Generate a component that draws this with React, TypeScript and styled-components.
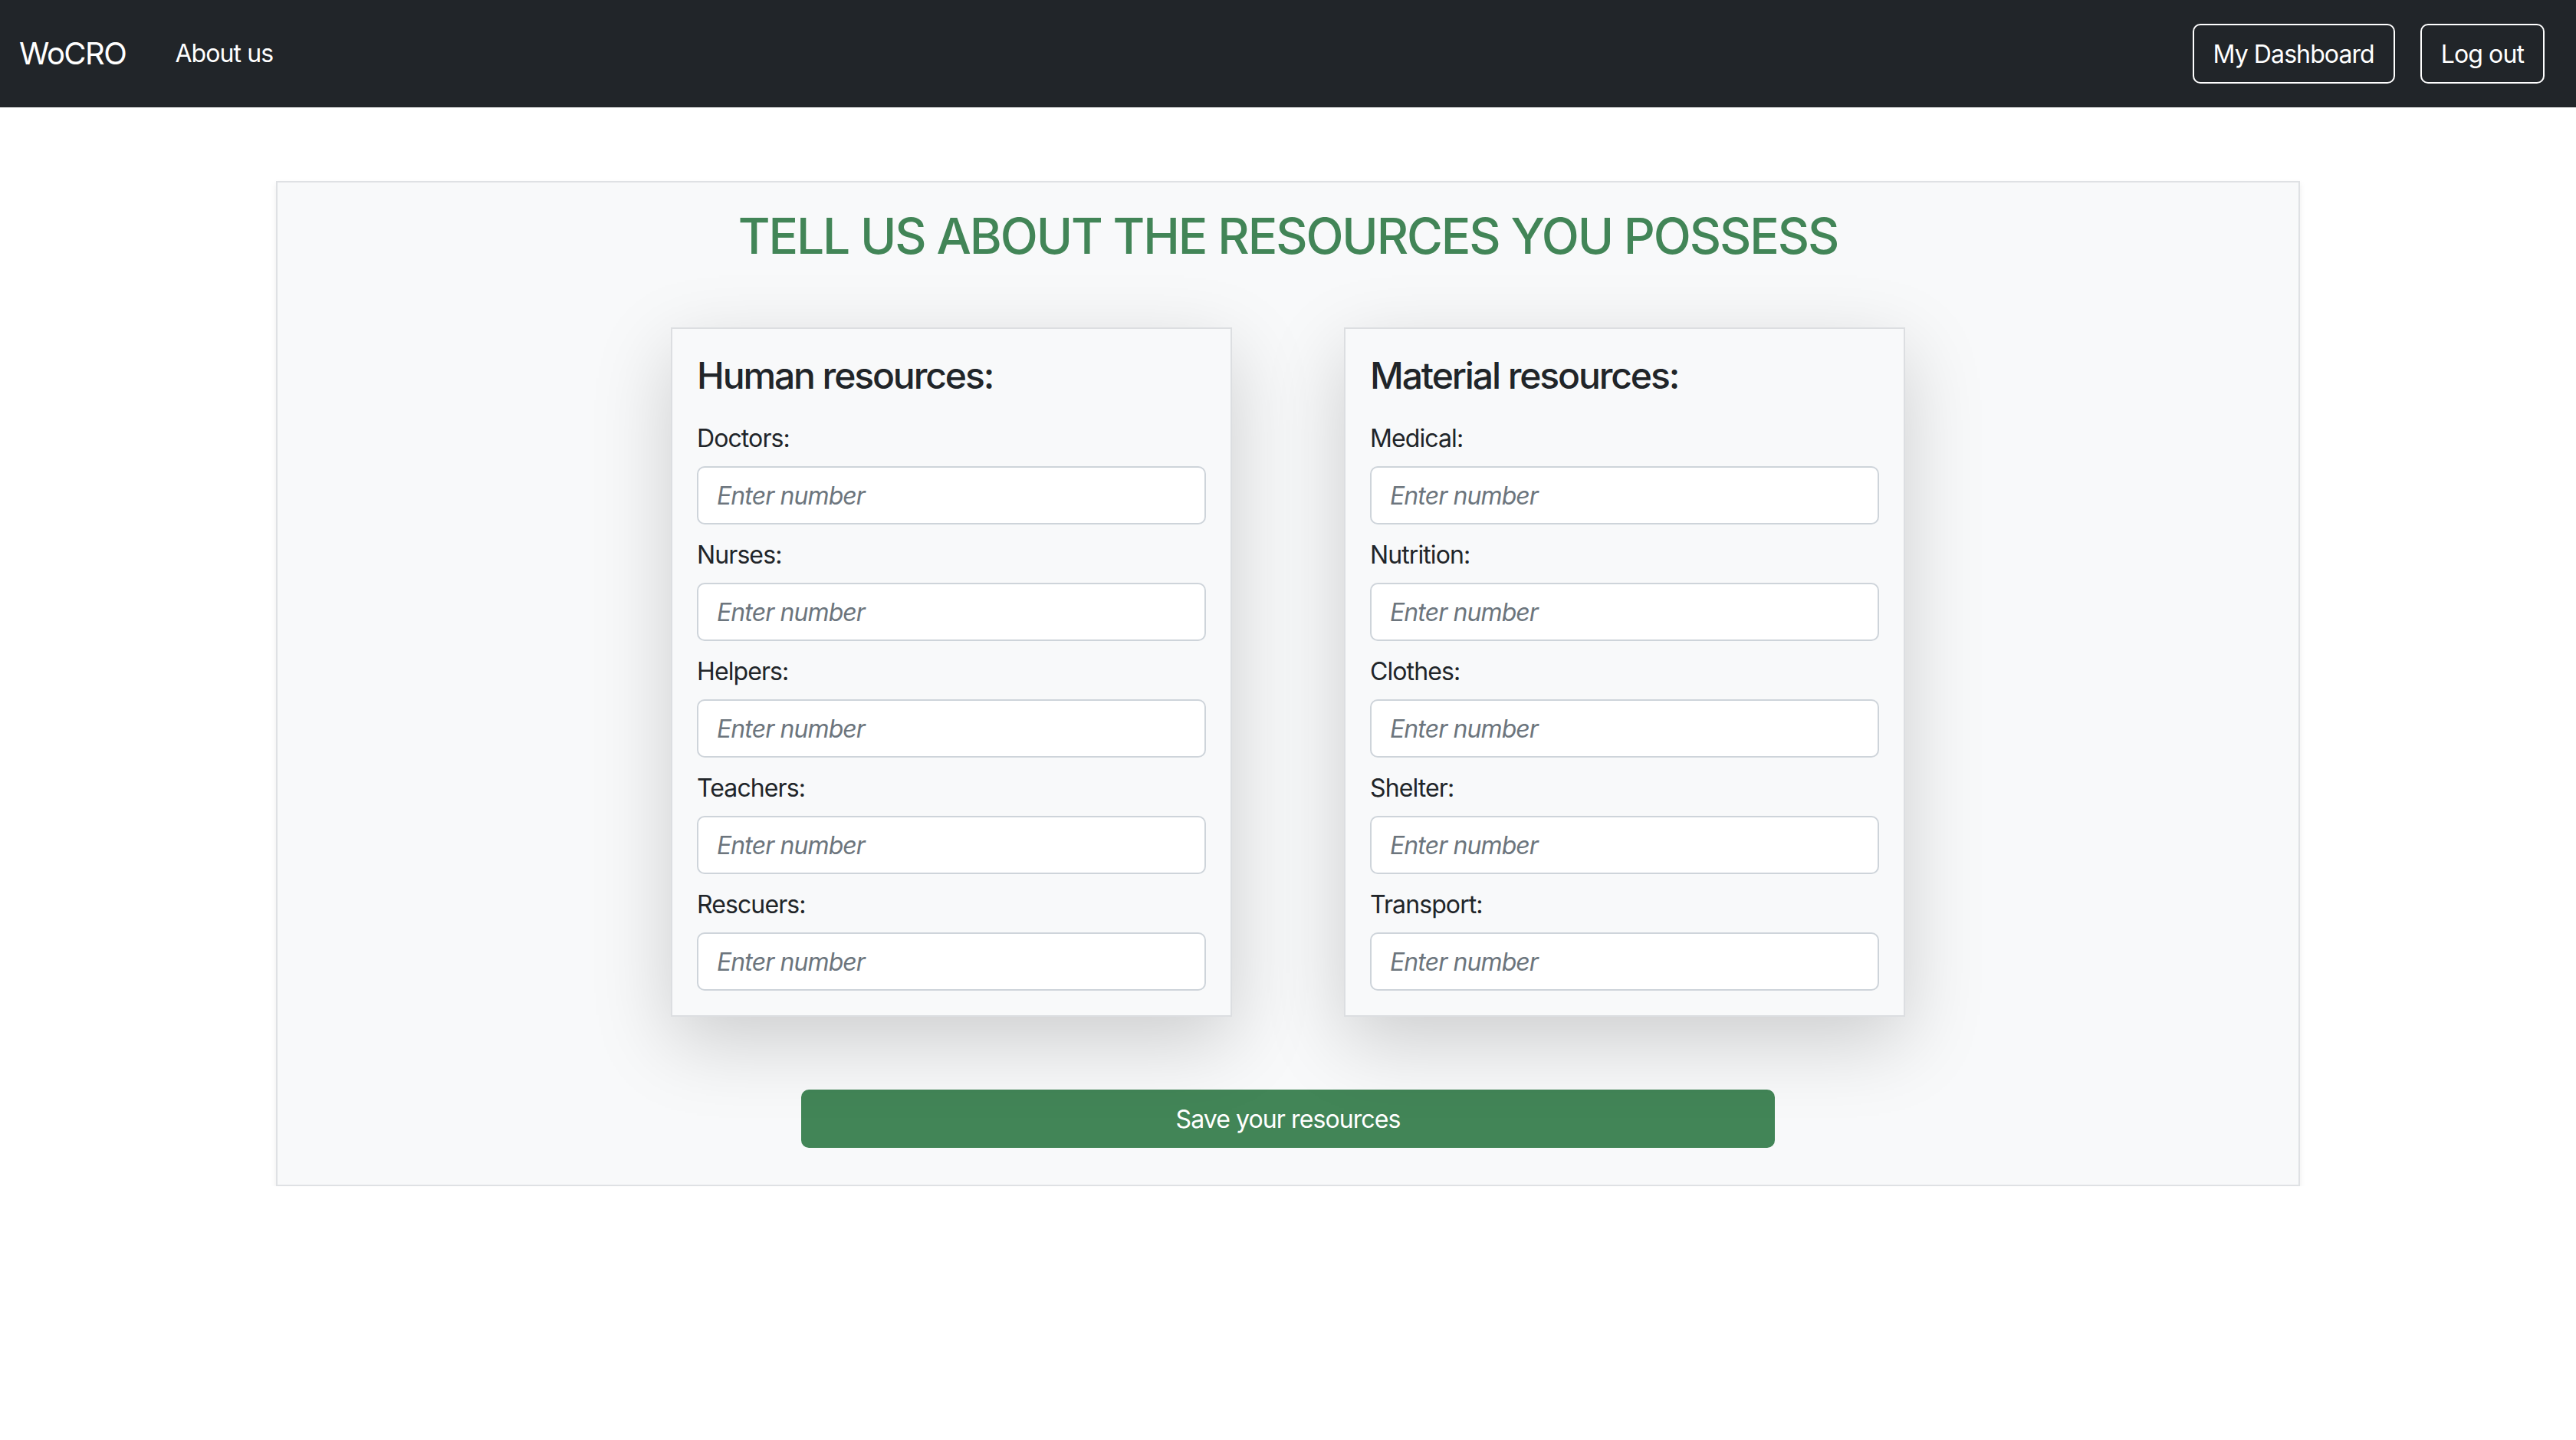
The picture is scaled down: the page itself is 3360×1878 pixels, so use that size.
import styled, { createGlobalStyle } from "styled-components";

const GlobalStyle = createGlobalStyle`
  * {
    box-sizing: border-box;
  }
  body {
    margin: 0;
    background: #ffffff;
    color: #212529;
    font-family: Inter, "Noto Sans", sans-serif;
    letter-spacing: -0.9px;
  }
`;

const humanFields = ["Doctors", "Nurses", "Helpers", "Teachers", "Rescuers"];
const materialFields = ["Medical", "Nutrition", "Clothes", "Shelter", "Transport"];

const ResourceCardCp = ({ title, fields }: { title: string; fields: string[] }) => {
  return (
    <ResourceCard>
      <CardTitle>{title}</CardTitle>
      <FieldList>
        {fields.map((name) => (
          <Field key={name}>
            <FieldLabel htmlFor={name}>{name}:</FieldLabel>
            <NumberInput id={name} type="number" placeholder="Enter number" />
          </Field>
        ))}
      </FieldList>
    </ResourceCard>
  );
};

const App = () => {
  return (
    <>
      <GlobalStyle />
      <NavBar>
        <Brand href="#">WoCRO</Brand>
        <NavLink href="#">About us</NavLink>
        <NavActions>
          <OutlineButton>My Dashboard</OutlineButton>
          <OutlineButton>Log out</OutlineButton>
        </NavActions>
      </NavBar>
      <FormPanel>
        <PageTitle>TELL US ABOUT THE RESOURCES YOU POSSESS</PageTitle>
        <CardsRow>
          <ResourceCardCp title="Human resources:" fields={humanFields} />
          <ResourceCardCp title="Material resources:" fields={materialFields} />
        </CardsRow>
        <SaveButton>Save your resources</SaveButton>
      </FormPanel>
    </>
  );
};

export default App;

const NavBar = styled.nav`
  height: 140px;
  background: #212529;
  display: flex;
  align-items: center;
  padding: 0 41px 0 25px;
`;

const Brand = styled.a`
  font-size: 40px;
  line-height: 1;
  letter-spacing: -1.5px;
  color: #ffffff;
  text-decoration: none;
  margin-right: 64px;
`;

const NavLink = styled.a`
  font-size: 32px;
  line-height: 1.5;
  color: #ffffff;
  text-decoration: none;
`;

const NavActions = styled.div`
  margin-left: auto;
  display: flex;
  gap: 33px;
`;

const OutlineButton = styled.button`
  height: 78px;
  padding: 0 25px;
  background: transparent;
  border: 2px solid #ffffff;
  border-radius: 10px;
  color: #ffffff;
  font-family: inherit;
  font-size: 32px;
  letter-spacing: inherit;
  cursor: pointer;
`;

const FormPanel = styled.section`
  width: 2640px;
  margin: 96px auto 0;
  padding: 32px 32px 34px;
  background: #f8f9fa;
  border: 2px solid #dfe1e4;
  box-shadow: 0 4px 8px rgba(0, 0, 0, 0.075);
`;

const PageTitle = styled.h2`
  margin: 0 0 80px;
  text-align: center;
  font-size: 64px;
  font-weight: 500;
  line-height: 1.2;
  color: #428557;
  letter-spacing: -2.1px;
`;

const CardsRow = styled.div`
  display: flex;
  justify-content: center;
  gap: 146px;
`;

const ResourceCard = styled.div`
  width: 732px;
  padding: 32px;
  background: #f8f9fa;
  border: 2px solid #dcdee1;
  box-shadow: 0 32px 96px rgba(0, 0, 0, 0.175);
`;

const CardTitle = styled.h4`
  margin: 0 0 30px;
  font-size: 48px;
  font-weight: 500;
  line-height: 1.2;
  letter-spacing: -2.1px;
  color: #212529;
`;

const FieldList = styled.div`
  display: flex;
  flex-direction: column;
  gap: 16px;
`;

const Field = styled.div`
  display: flex;
  flex-direction: column;
`;

const FieldLabel = styled.label`
  font-size: 32px;
  line-height: 1.5;
  margin-bottom: 12px;
`;

const NumberInput = styled.input`
  height: 76px;
  width: 100%;
  padding: 0 24px;
  background: #ffffff;
  border: 2px solid #ced4da;
  border-radius: 10px;
  font-family: inherit;
  font-size: 32px;
  letter-spacing: inherit;
  color: #212529;
  appearance: textfield;

  &::placeholder {
    color: #6c757d;
    font-style: italic;
  }

  &::-webkit-outer-spin-button,
  &::-webkit-inner-spin-button {
    -webkit-appearance: none;
    margin: 0;
  }
`;

const SaveButton = styled.button`
  display: block;
  width: 1270px;
  height: 76px;
  margin: 95px auto 14px;
  background: #428557;
  border: none;
  border-radius: 10px;
  color: #ffffff;
  font-family: inherit;
  font-size: 32px;
  letter-spacing: inherit;
  cursor: pointer;
`;
